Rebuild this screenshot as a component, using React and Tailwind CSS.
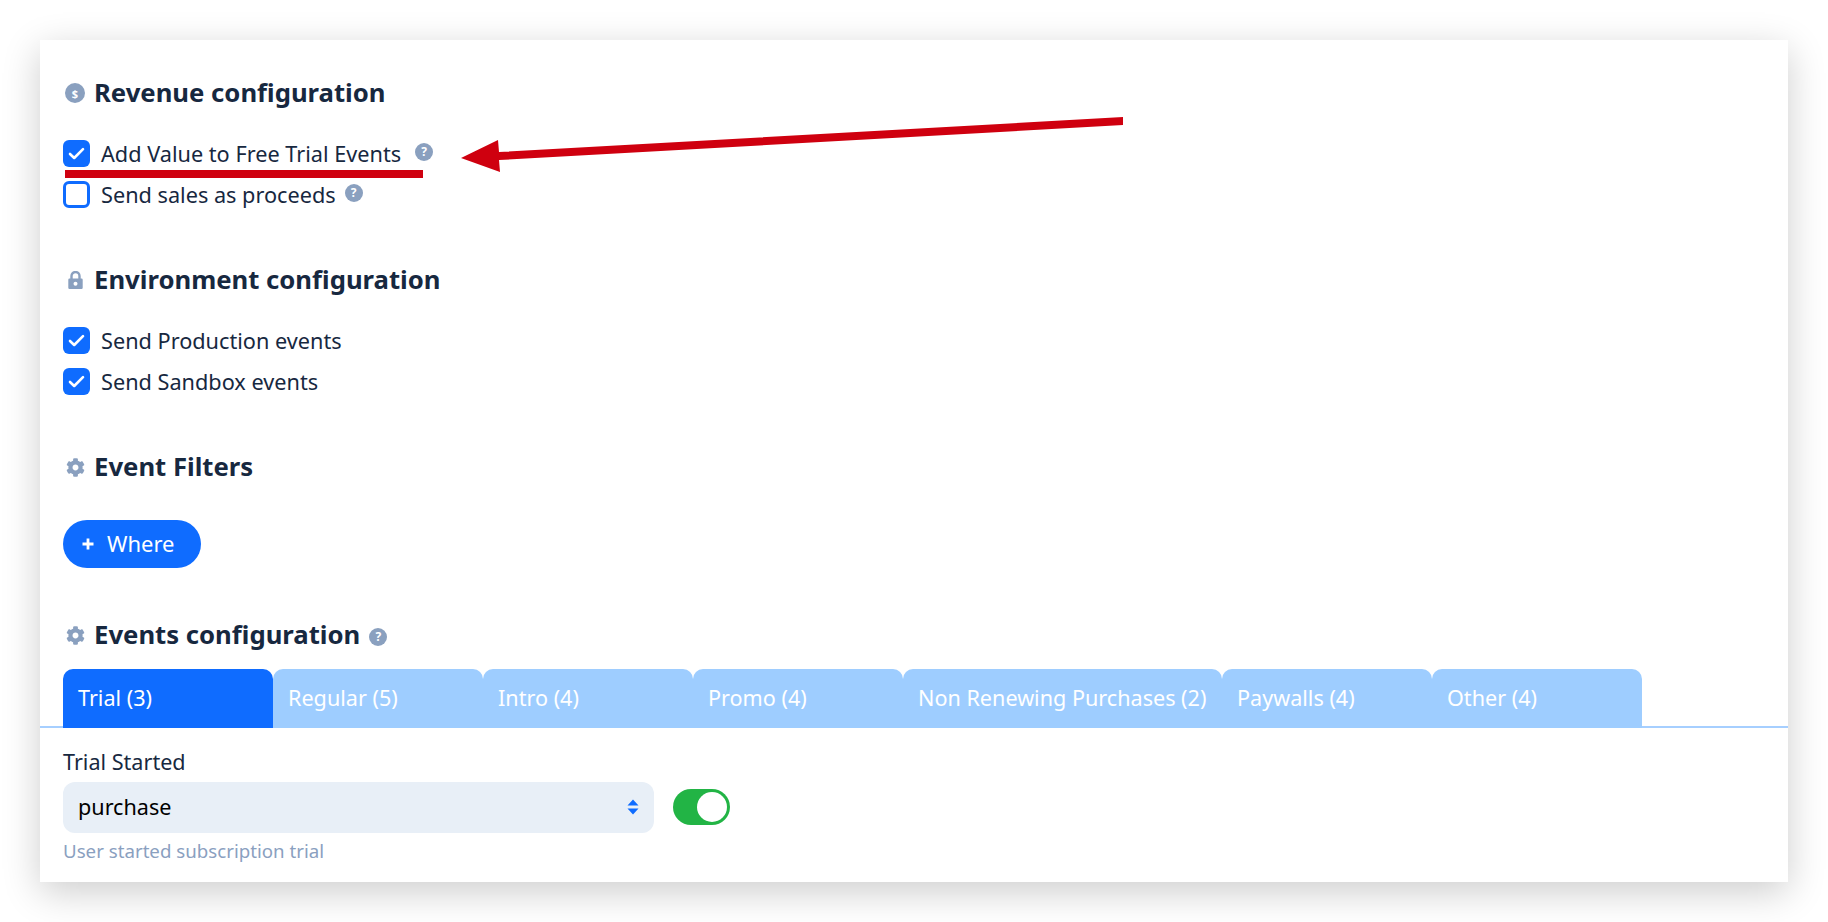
import React from "react";
import { FaCog } from "react-icons/fa";

const Help = () => (
  <span className="w-[18px] h-[18px] rounded-full bg-[#8aa0bf] flex items-center justify-center text-white text-[12px] leading-none font-bold shrink-0">?</span>
);

const Lock = () => (
  <svg width="15" height="18" viewBox="0 0 15 18">
    <path d="M3.5 8V5a4 4 0 0 1 8 0v3" fill="none" stroke="#8aa0bf" strokeWidth="2.4" />
    <path fillRule="evenodd" fill="#8aa0bf" d="M1.5 7.5h12a1.2 1.2 0 0 1 1.2 1.2v8.1a1.2 1.2 0 0 1-1.2 1.2h-12A1.2 1.2 0 0 1 .3 16.800V8.700a1.200 1.200 0 0 1 1.200-1.200zM7.500 10.800a2 2 0 1 0 0 4 2 2 0 0 0 0-4z" />
  </svg>
);

function Check({ checked, label, help }) {
  return (
    <div className="flex items-center h-[27px]">
      {checked ? (
        <span className="w-[27px] h-[27px] rounded-[6px] bg-[#0f6cff] flex items-center justify-center shrink-0">
          <svg width="17" height="13" viewBox="0 0 17 13" fill="none">
            <path d="M2 7 L6.2 11 L15 2.2" stroke="white" strokeWidth="2.6" strokeLinecap="round" strokeLinejoin="round" />
          </svg>
        </span>
      ) : (
        <span className="w-[27px] h-[27px] rounded-[6px] bg-white border-[3px] border-[#0f6cff] shrink-0" />
      )}
      <span className="ml-[11px] text-[21.7px] leading-[27px] text-[#17283f]">{label}</span>
      {help && <span className={`${help} -mt-[4px]`}><Help /></span>}
    </div>
  );
}

function Heading({ icon, children, help }) {
  return (
    <div className="flex items-center h-[30px]">
      <span className="w-[22px] ml-[1px] flex items-center justify-center text-[#8aa0bf]">{icon}</span>
      <h2 className="ml-[8px] -mt-[1px] text-[25.7px] leading-[30px] font-bold text-[#17283f]">{children}</h2>
      {help && <span className="ml-[9px] mt-[3px]"><Help /></span>}
    </div>
  );
}

const tabs = [
  ["Trial (3)", "w-[210px] bg-[#0f6cff]"],
  ["Regular (5)", "w-[210px] bg-[#9ecdff]"],
  ["Intro (4)", "w-[210px] bg-[#9ecdff]"],
  ["Promo (4)", "w-[210px] bg-[#9ecdff]"],
  ["Non Renewing Purchases (2)", "w-[319px] bg-[#9ecdff]"],
  ["Paywalls (4)", "w-[210px] bg-[#9ecdff]"],
  ["Other (4)", "w-[210px] bg-[#9ecdff]"],
];

export default function App() {
  return (
    <div className="relative w-[1828px] h-[922px] overflow-hidden bg-white font-['Noto_Sans',sans-serif] p-[40px]">
      <div className="bg-white h-[842px] shadow-[0_10px_36px_rgba(0,0,0,0.2)] pt-[38px]">
        <div className="px-[23px]">
          <Heading icon={
            <span className="w-[20px] h-[20px] rounded-full bg-[#8aa0bf] flex items-center justify-center text-white text-[11px] leading-none font-bold">$</span>
          }>Revenue configuration</Heading>
          <div className="mt-[32px] flex flex-col gap-[14px]">
            <Check checked label="Add Value to Free Trial Events" help="ml-[14px]" />
            <Check label="Send sales as proceeds" help="ml-[9px]" />
          </div>

          <div className="mt-[57px]">
            <Heading icon={<Lock />}>Environment configuration</Heading>
          </div>
          <div className="mt-[32px] flex flex-col gap-[14px]">
            <Check checked label="Send Production events" />
            <Check checked label="Send Sandbox events" />
          </div>

          <div className="mt-[57px]">
            <Heading icon={<FaCog className="w-[19px] h-[19px]" />}>Event Filters</Heading>
          </div>
          <button className="mt-[38px] h-[48px] w-[138px] rounded-full bg-[#0f6cff] text-white text-[22px] flex items-center pl-[19px]">
            <svg width="12" height="12" viewBox="0 0 12 12" className="shrink-0">
              <path d="M6 0.5V11.500M0.500 6H11.500" stroke="white" strokeWidth="2.800" />
            </svg>
            <span className="ml-[13px] -mt-[1px]">Where</span>
          </button>

          <div className="mt-[52px]">
            <Heading help icon={<FaCog className="w-[19px] h-[19px]" />}>Events configuration</Heading>
          </div>
        </div>

        <div className="mt-[19px] flex px-[23px] border-b-2 border-[#a6cfff] h-[59px]">
          {tabs.map(([t, c]) => (
            <div key={t} className={`${c} h-[59px] rounded-t-[10px] pl-[15px] flex items-center text-white text-[21.6px] whitespace-nowrap`}>
              {t}
            </div>
          ))}
        </div>

        <div className="px-[23px] mt-[22px]">
          <div className="text-[21.6px] leading-[24px] text-[#17283f]">Trial Started</div>
          <div className="mt-[8px] flex items-start">
            <div className="w-[591px] h-[51px] rounded-[12px] bg-[#e8eff7] flex items-center justify-between pl-[15px] pr-[15px]">
              <span className="text-[21.6px] text-black">purchase</span>
              <svg width="12" height="16" viewBox="0 0 12 16" className="-mt-[2px]">
                <path d="M6 0.500L11.500 6.500H0.500Z M6 15.500L0.500 9.500H11.500Z" fill="#0f6cff" />
              </svg>
            </div>
            <div className="ml-[19px] mt-[7px] w-[57px] h-[36px] rounded-full bg-[#22b445] relative">
              <span className="absolute right-[3px] top-[3px] w-[30px] h-[30px] rounded-full bg-white" />
            </div>
          </div>
          <div className="mt-[8px] text-[18.7px] leading-[20px] text-[#8aa0bf]">User started subscription trial</div>
        </div>
      </div>

      <svg className="absolute left-0 top-0 pointer-events-none" width="1828" height="922" viewBox="0 0 1828 922">
        <rect x="65" y="170" width="358" height="8" fill="#cf000f" />
        <polygon fill="#cf000f" points="1123,117 1123,125 499,160 500,172 461,158 498,140 499,152" />
      </svg>
    </div>
  );
}
